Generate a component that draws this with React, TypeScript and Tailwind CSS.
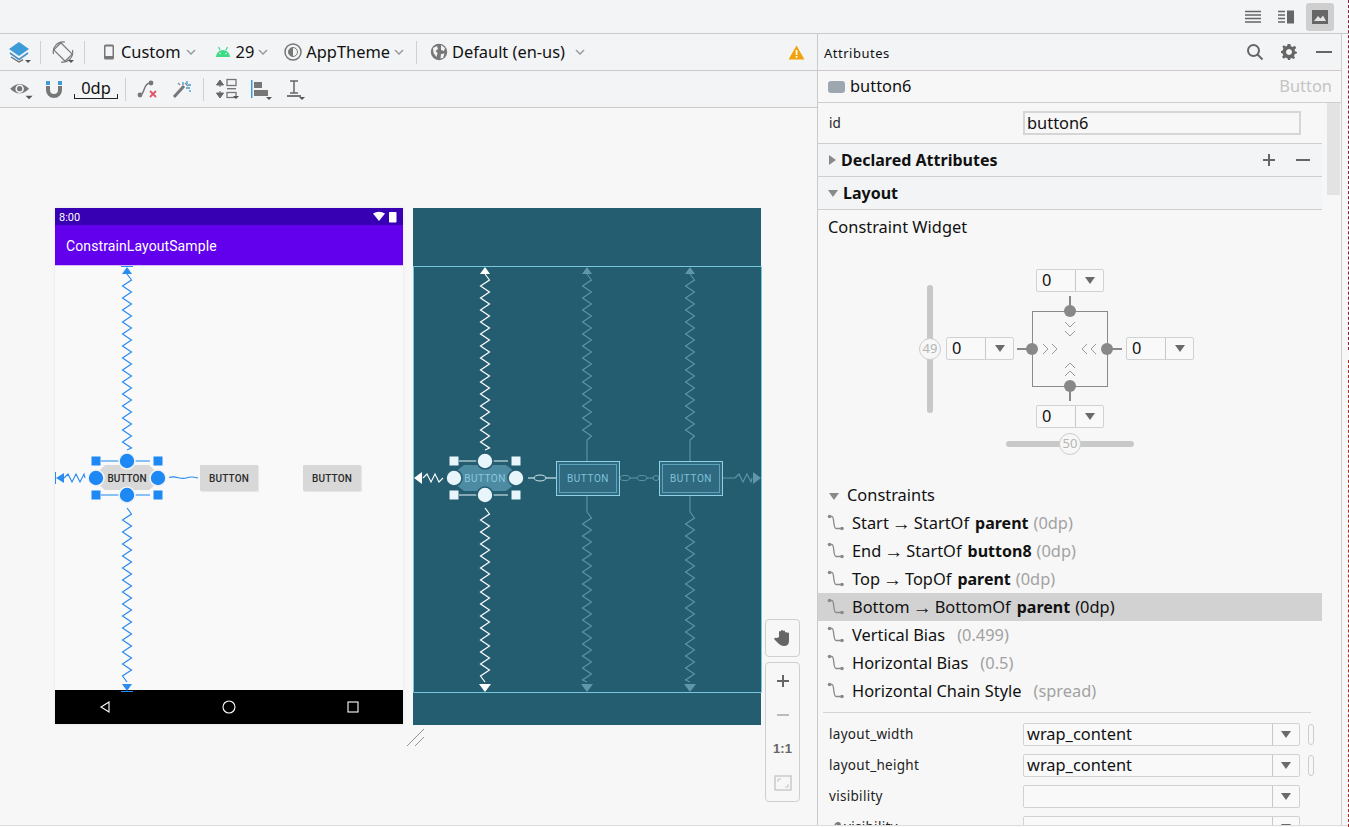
const font = { fontFamily: '"Noto Sans", "Open Sans", sans-serif' };

// zigzag along a vertical run, used for the constraint springs
const zigV = (x: number, y1: number, y2: number, amp = 4.5, step = 6) => {
  let d = `M${x} ${y1}`;
  let side = 1;
  for (let y = y1 + step; y < y2; y += step) {
    d += ` L${x + side * amp} ${y}`;
    side = -side;
  }
  return d + ` L${x} ${y2}`;
};

const zigH = (x1: number, x2: number, y: number, amp = 4, step = 4) => {
  let d = `M${x1} ${y}`;
  let side = -1;
  for (let x = x1 + step; x < x2; x += step) {
    d += ` L${x} ${y + side * amp}`;
    side = -side;
  }
  return d + ` L${x2} ${y}`;
};

const Chevron = ({ className = '' }: { className?: string }) => (
  <svg width="10" height="6" viewBox="0 0 10 6" className={className}>
    <path d="M1 1 L5 5 L9 1" fill="none" stroke="#9aa0a6" strokeWidth="1.6" />
  </svg>
);

const Corner = () => <path d="M0 0 h6 l-3 3 z" fill="#555" />;

const Sep = ({ className = '' }: { className?: string }) => <div className={`w-px h-[23px] bg-[#d0d0d0] ${className}`} />;

const LayersIcon = () => (
  <svg width="24" height="24" viewBox="0 0 24 24">
    <path d="M11 2 L21 9 L11 16 L1 9 Z" fill="#3d9bd8" />
    <path d="M2 13 L11 19.5 L20 13" fill="none" stroke="#4a90c8" strokeWidth="1.6" />
    <path d="M3 17 L11 22 L15 19.6" fill="none" stroke="#6e6e6e" strokeWidth="1.4" />
    <g transform="translate(17 20)"><Corner /></g>
  </svg>
);

const RotateIcon = () => (
  <svg width="24" height="24" viewBox="0 0 24 24" fill="none" stroke="#777" strokeWidth="1.2">
    <rect x="6" y="4" width="10" height="16" rx="1" transform="rotate(-45 11 12)" />
    <path d="M1.5 14 A10 10 0 0 1 13 2" />
    <path d="M20.5 10 A10 10 0 0 1 9 22" />
    <g transform="translate(16 20)" stroke="none"><Corner /></g>
  </svg>
);

const PhoneIcon = () => (
  <svg width="12" height="16" viewBox="0 0 12 16">
    <rect x="1" y="0.5" width="10" height="15" rx="1.5" fill="#777" />
    <rect x="2.5" y="2.5" width="7" height="9.5" fill="#f4f4f6" />
  </svg>
);

const AndroidIcon = () => (
  <svg width="16" height="12" viewBox="0 0 16 12">
    <path d="M1 11 A7 7 0 0 1 15 11 Z" fill="#3ddc84" />
    <path d="M3.5 1 L5 4 M12.5 1 L11 4" stroke="#3ddc84" strokeWidth="1.2" />
    <circle cx="5" cy="7.5" r="0.8" fill="#f4f4f6" />
    <circle cx="11" cy="7.5" r="0.8" fill="#f4f4f6" />
  </svg>
);

const ThemeIcon = () => (
  <svg width="18" height="18" viewBox="0 0 18 18">
    <circle cx="9" cy="9" r="8" fill="none" stroke="#777" strokeWidth="1.5" />
    <path d="M9 4.5 A4.5 4.5 0 0 0 9 13.5 Z" fill="#777" />
    <circle cx="9" cy="9" r="4.5" fill="none" stroke="#777" strokeWidth="1" />
  </svg>
);

const GlobeIcon = () => (
  <svg width="18" height="18" viewBox="0 0 18 18">
    <circle cx="9" cy="9" r="8.2" fill="#777" />
    <path d="M3 5 L7 3 L8 6 L5.5 8 L7.5 10 L6.5 14 L3.5 10 Z M11 2 L15 5 L14 8 L11 7 Z M11 11 L14.5 10.5 L13 15 L10.5 15.5 Z" fill="#f4f4f6" />
  </svg>
);

const WarnIcon = () => (
  <svg width="17" height="15" viewBox="0 0 17 15">
    <path d="M8.5 0.5 L16.5 14.5 H0.5 Z" fill="#f0a30a" />
    <rect x="7.7" y="5" width="1.7" height="5" fill="#fff" />
    <rect x="7.7" y="11" width="1.7" height="1.8" fill="#fff" />
  </svg>
);

const EyeIcon = () => (
  <svg width="26" height="24" viewBox="0 0 22 20">
    <path d="M1 8 Q9 0 17 8 Q9 16 1 8 Z" fill="#777" />
    <circle cx="9" cy="8" r="3.6" fill="#f4f4f6" />
    <circle cx="9" cy="8" r="2.2" fill="#777" />
    <g transform="translate(14 14)"><Corner /></g>
  </svg>
);

const MagnetIcon = () => (
  <svg width="18" height="18" viewBox="0 0 18 18">
    <path d="M3 6 V10 A6 6 0 0 0 15 10 V6" fill="none" stroke="#777" strokeWidth="4" />
    <rect x="1" y="1" width="4" height="4" fill="#3d9bd8" />
    <rect x="13" y="1" width="4" height="4" fill="#3d9bd8" />
  </svg>
);

const ClearIcon = () => (
  <svg width="22" height="20" viewBox="0 0 22 20">
    <path d="M3 16 C8 16 6 4 13 4" fill="none" stroke="#777" strokeWidth="1.5" />
    <circle cx="3" cy="16" r="2.4" fill="#777" />
    <circle cx="14" cy="4" r="2.4" fill="#777" />
    <path d="M13 12 L19 18 M19 12 L13 18" stroke="#e05565" strokeWidth="1.8" />
  </svg>
);

const WandIcon = () => (
  <svg width="20" height="20" viewBox="0 0 20 20">
    <path d="M2 18 L12 7" stroke="#777" strokeWidth="3" />
    <path d="M11 3 V6 M15 2 V5 M14 9 H18 M16 6 H19 M18 11 V13" stroke="#3d9bd8" strokeWidth="1.3" />
    <path d="M6 4 L8 6 M13 4 L16 7" stroke="#888" strokeWidth="1.2" />
  </svg>
);

const DistributeIcon = () => (
  <svg width="24" height="22" viewBox="0 0 24 22">
    <path d="M4 2 L7.5 7 H0.5 Z M4 20 L7.5 15 H0.5 Z M4 6 V9 M4 13 V16" fill="#666" stroke="#666" />
    <rect x="11" y="1.5" width="9" height="6" fill="none" stroke="#777" strokeWidth="1.3" />
    <rect x="11" y="10" width="9" height="1.4" fill="#777" />
    <rect x="11" y="14.5" width="9" height="5" fill="none" stroke="#777" strokeWidth="1.3" />
    <g transform="translate(17 18)"><Corner /></g>
  </svg>
);

const AlignIcon = () => (
  <svg width="24" height="22" viewBox="0 0 24 22">
    <rect x="1" y="1" width="1.5" height="18" fill="#3d9bd8" />
    <rect x="4" y="3" width="8" height="6" fill="#777" />
    <rect x="4" y="11" width="14" height="6" fill="#777" />
    <g transform="translate(16 18)"><Corner /></g>
  </svg>
);

const BaselineIcon = () => (
  <svg width="24" height="22" viewBox="0 0 24 22">
    <path d="M4 2 H12 M8 2 V14 M4 14 H12" stroke="#666" strokeWidth="1.5" fill="none" />
    <rect x="1" y="16" width="14" height="2" fill="#777" />
    <g transform="translate(13 18)"><Corner /></g>
  </svg>
);

const LinkIcon = () => (
  <svg width="18" height="18" viewBox="0 0 18 18" className="shrink-0">
    <path d="M2.5 2.5 H5 C7.5 2.5 6 14.5 9 14.5 H15" fill="none" stroke="#8a8a8a" strokeWidth="1.3" />
    <circle cx="2.5" cy="2.5" r="1.8" fill="#8a8a8a" />
    <circle cx="15" cy="14.5" r="1.8" fill="#8a8a8a" />
  </svg>
);

const Triangle = ({ className = 'text-[#8a8a8a]' }: { className?: string }) => (
  <svg width="10" height="7" viewBox="0 0 10 7" className={className}>
    <path d="M0 0 H10 L5 7 Z" fill="currentColor" />
  </svg>
);

const TriangleRight = () => (
  <svg width="10" height="10" viewBox="0 0 10 10">
    <path d="M1 0 L8 5 L1 10 Z" fill="#8a8a8a" />
  </svg>
);

const Combo = ({ value, className = '', arrow = 30 }: { value?: string; className?: string; arrow?: number }) => (
  <div className={`flex h-[23px] items-stretch rounded-[2px] border border-[#d2d2d2] bg-[#f9f9f9] ${className}`}>
    <div className="flex-1 pl-[3px] text-[16.4px] leading-[20px] text-[#111]">{value}</div>
    <div className="flex items-center justify-center border-l border-[#c8c8c8]" style={{ width: arrow - 3 }}>
      <Triangle className="text-[#6a6a6a]" />
    </div>
  </div>
);

const PhoneSprings = () => (
  <svg className="absolute inset-0 overflow-visible" width="348" height="516" viewBox="55 208 348 516" fill="none">
    <path d="M121 266.5 H133" stroke="#2a8cf0" />
    <path d="M127 267 L132 274 H122 Z" fill="#2a8cf0" />
    <path d={zigV(127, 274, 450)} stroke="#2a8cf0" strokeWidth="1.2" />
    <path d={zigV(127, 508, 682)} stroke="#2a8cf0" strokeWidth="1.2" />
    <path d="M127 691 L132 684 H122 Z" fill="#2a8cf0" />
    <path d="M121 691.5 H133" stroke="#2a8cf0" />
    <path d="M55.5 472 V484" stroke="#2a8cf0" />
    <path d="M56 478 L64 473 V483 Z" fill="#2a8cf0" />
    <path d={zigH(64, 85, 478, 4, 4)} stroke="#2a8cf0" strokeWidth="1.1" />
    <path d="M169 477.5 C176 475 180 480 186 478 S194 477 198 478" stroke="#2a8cf0" strokeWidth="1.1" />
    <path d="M105 465 H149 L157 473 V483 L149 490 H105 L97 483 V473 Z" fill="#d8d8d8" />
    <path d="M101 461 H150 M101 495 H150" stroke="#1e88f5" strokeWidth="1.2" />
    {[[96, 461], [158, 461], [96, 495], [158, 495]].map(([x, y]) => (
      <rect key={`${x}${y}`} x={x - 4.5} y={y - 4.5} width="9" height="9" fill="#1e88f5" />
    ))}
    {[[127, 461], [127, 495], [96, 478], [158, 478]].map(([x, y]) => (
      <circle key={`${x}${y}`} cx={x} cy={y} r="8" fill="#1e88f5" stroke="#f4f4f4" strokeWidth="1.6" />
    ))}
  </svg>
);

const BlueprintSprings = () => {
  const dim = '#5f97a8';
  const bright = '#ffffff';
  return (
    <svg className="absolute inset-0 overflow-visible" width="348" height="517" viewBox="413 208 348 517" fill="none">
      <path d="M413.5 266.5 H761.5 V692.5 H413.5 Z" stroke="#76c6dd" strokeWidth="1" />
      <path d="M485 267 L490 274 H480 Z" fill={bright} />
      <path d={zigV(485, 274, 450)} stroke={bright} strokeWidth="1.2" />
      <path d={zigV(485, 508, 682)} stroke={bright} strokeWidth="1.2" />
      <path d="M485 692 L491 684 H479 Z" fill={bright} />
      {[587, 690].map(x => (
        <g key={x} stroke={dim}>
          <path d={`M${x} 267 L${x + 5} 274 H${x - 5} Z`} fill={dim} stroke="none" />
          <path d={zigV(x, 274, 440)} strokeWidth="1.1" />
          <path d={`M${x} 440 V461`} strokeWidth="1.1" />
          <path d={`M${x} 496 V512`} strokeWidth="1.1" />
          <path d={zigV(x, 512, 682)} strokeWidth="1.1" />
          <path d={`M${x} 692 L${x + 6} 684 H${x - 6} Z`} fill={dim} stroke="none" />
        </g>
      ))}
      <path d="M414 478 L422 472 V484 Z" fill={bright} />
      <path d={zigH(423, 443, 478, 4, 4)} stroke={bright} strokeWidth="1.1" />
      <path d="M528 478 H556" stroke="#cfe6ee" strokeWidth="1.2" />
      <ellipse cx="540" cy="478" rx="6" ry="3" fill="#245c70" stroke="#cfe6ee" />
      <path d="M620 478 H659" stroke={dim} strokeWidth="1.2" />
      <ellipse cx="625" cy="478" rx="5" ry="2.5" fill="#245c70" stroke={dim} />
      <ellipse cx="642" cy="478" rx="5" ry="2.5" fill="#245c70" stroke={dim} />
      <ellipse cx="656" cy="478" rx="3" ry="2.5" fill="#245c70" stroke={dim} />
      <path d="M723 478 H735" stroke={dim} />
      <path d={zigH(735, 752, 478, 4, 4)} stroke={dim} strokeWidth="1.1" />
      <path d="M761 478 L753 472 V484 Z" fill={dim} />
      <path d="M464 465 H506 L515 472 V484 L506 491 H464 L455 484 V472 Z" fill="#4d8ba3" />
      <path d="M459 461 H508 M459 495 H508" stroke="#e8f6fc" strokeWidth="1.2" />
      {[[454, 461], [516, 461], [454, 495], [516, 495]].map(([x, y]) => (
        <rect key={`${x}${y}`} x={x - 4.5} y={y - 4.5} width="9" height="9" fill="#e8f6fc" />
      ))}
      {[[485, 461], [485, 495], [454, 478], [516, 478]].map(([x, y]) => (
        <circle key={`${x}${y}`} cx={x} cy={y} r="8" fill="#e8f6fc" stroke="#245c70" strokeWidth="1.6" />
      ))}
    </svg>
  );
};

const PhoneButton = ({ className }: { className: string }) => (
  <div className={`absolute flex h-[26px] w-[58px] items-center justify-center rounded-[1px] bg-[#d8d8d8] shadow-[1px_1px_1px_#e6e6e6] font-['Roboto'] text-[10px] font-medium tracking-[0.2px] text-[#2a2a2a] ${className}`}>
    BUTTON
  </div>
);

const BlueButton = ({ className }: { className: string }) => (
  <div className={`absolute h-[35px] w-[64px] border border-[#8fd0e5] bg-[#2f6a80] p-[2px] ${className}`}>
    <div className="flex h-full items-center justify-center border border-[#5ea3bb] font-['Roboto'] text-[10px] tracking-[0.6px] text-[#7fc3da]">
      BUTTON
    </div>
  </div>
);

const ZoomBtn = ({ children }: { children: React.ReactNode }) => (
  <div className="flex h-[34px] items-center justify-center">{children}</div>
);

const Canvas = () => (
  <div className="relative flex-1 bg-[#f7f7f7]">
    {/* phone preview */}
    <div className="absolute left-[55px] top-[100px] flex h-[516px] w-[348px] flex-col bg-[#f9f9f9] shadow-[0_0_3px_#e4e4e4]">
      <div className="flex h-[17px] items-center justify-between bg-[#3700b3] pl-[4px] pr-[6px] font-['Roboto'] text-[11px] text-white">
        <span className="pt-[3px]">8:00</span>
        <svg width="25" height="12" viewBox="0 0 25 12">
          <path d="M1 2.5 Q7 -1 13 2.5 L7 10 Z" fill="#fff" />
          <rect x="17" y="1" width="7.5" height="10.5" rx="0.8" fill="#fff" />
        </svg>
      </div>
      <div className="flex h-[41px] items-center border-b border-[#d7b8f5] bg-[#6200ee] pl-[11px] pt-[3px] font-['Roboto'] text-[14px] tracking-[0.1px] text-white">
        ConstrainLayoutSample
      </div>
      <div className="relative flex-1">
        <PhoneButton className="left-[145px] top-[199px]" />
        <PhoneButton className="left-[248px] top-[199px]" />
      </div>
      <div className="flex h-[34px] items-center justify-between bg-black px-[44px]">
        <svg width="12" height="12" viewBox="0 0 12 12"><path d="M10 1 L2 6 L10 11 Z" fill="none" stroke="#fff" strokeWidth="1.1" /></svg>
        <svg width="14" height="14" viewBox="0 0 14 14"><circle cx="7" cy="7" r="6" fill="none" stroke="#fff" strokeWidth="1.1" /></svg>
        <svg width="12" height="12" viewBox="0 0 12 12"><rect x="1" y="1" width="10" height="10" fill="none" stroke="#fff" strokeWidth="1.1" /></svg>
      </div>
      <PhoneSprings />
      <div className="absolute left-[52px] top-[257px] flex h-[26px] w-[40px] items-center justify-center font-['Roboto'] text-[10px] font-medium text-[#2a2a2a]">
        BUTTON
      </div>
    </div>

    {/* blueprint */}
    <div className="absolute left-[413px] top-[100px] h-[517px] w-[348px] bg-[#245c70]">
      <BlueprintSprings />
      <div className="absolute left-[42px] top-[257px] flex h-[26px] w-[60px] items-center justify-center font-['Roboto'] text-[10px] tracking-[0.5px] text-[#8cc8dd]">
        BUTTON
      </div>
      <BlueButton className="left-[143px] top-[253px]" />
      <BlueButton className="left-[246px] top-[253px]" />
    </div>

    <svg className="absolute left-[406px] top-[620px]" width="20" height="20" viewBox="0 0 20 20">
      <path d="M1 18 L18 1 M9 18 L18 9" stroke="#777" strokeWidth="0.8" />
    </svg>

    {/* zoom controls */}
    <div className="absolute left-[765px] top-[511px] flex flex-col gap-[5px]">
      <div className="flex h-[38px] w-[35px] items-center justify-center rounded-[4px] border border-[#cfcfcf]">
        <svg width="20" height="20" viewBox="0 0 20 20">
          <path d="M6 9 V4 a1 1 0 0 1 2 0 V3 a1 1 0 0 1 2 0 V3.5 a1 1 0 0 1 2 0 V5 a1 1 0 0 1 2 0 V5.5 a1 1 0 0 1 2 0 V13 Q16 18 11 18 Q8 18 6 16 L1 11 Q2 9 4 10 Z" fill="#666" />
        </svg>
      </div>
      <div className="flex h-[140px] w-[35px] flex-col items-center justify-center rounded-[4px] border border-[#cfcfcf]">
        <ZoomBtn>
          <svg width="14" height="14" viewBox="0 0 14 14"><path d="M7 1 V13 M1 7 H13" stroke="#666" strokeWidth="2" /></svg>
        </ZoomBtn>
        <ZoomBtn>
          <svg width="14" height="14" viewBox="0 0 14 14"><path d="M1 7 H13" stroke="#b9bcc2" strokeWidth="2" /></svg>
        </ZoomBtn>
        <ZoomBtn>
          <span className="font-['Liberation_Sans'] text-[13px] font-bold text-[#666]">1:1</span>
        </ZoomBtn>
        <ZoomBtn>
          <svg width="18" height="16" viewBox="0 0 18 16" fill="none" stroke="#c4c4c4">
            <rect x="1" y="1" width="16" height="14" strokeWidth="1.3" />
            <path d="M4 7 V4 H7 M14 9 V12 H11" />
          </svg>
        </ZoomBtn>
      </div>
    </div>
  </div>
);

const TopBar = () => (
  <div className="flex h-[34px] shrink-0 items-center justify-end border-b border-[#c9c9c9] bg-[#f3f4f6] pr-[15px]">
    <svg width="16" height="14" viewBox="0 0 16 14" className="mr-[17px]">
      <path d="M0 1.5 H16 M0 5 H16 M0 8.5 H16 M0 12 H16" stroke="#666" strokeWidth="1.3" />
    </svg>
    <svg width="16" height="14" viewBox="0 0 16 14" className="mr-[12px]">
      <path d="M0 1.5 H7 M0 5 H7 M0 8.5 H7 M0 12 H7" stroke="#666" strokeWidth="1.3" />
      <rect x="9" y="0.5" width="7" height="13" fill="#666" />
    </svg>
    <div className="flex h-[28px] w-[28px] items-center justify-center rounded-[3px] bg-[#cfcfcf]">
      <svg width="16" height="14" viewBox="0 0 16 14">
        <rect width="16" height="14" fill="#666" />
        <path d="M2 11 L6 6 L8.5 8.5 L11 5.5 L14 11 Z" fill="#e4e4e4" />
      </svg>
    </div>
  </div>
);

const DesignToolbar = () => (
  <div className="flex h-[37px] shrink-0 items-center border-b border-[#c9c9c9] bg-[#f3f4f6] text-[16.4px] text-[#111]">
    <div className="ml-[8px]"><LayersIcon /></div>
    <Sep className="ml-[8px]" />
    <div className="ml-[11px]"><RotateIcon /></div>
    <Sep className="ml-[8px]" />
    <div className="ml-[18px]"><PhoneIcon /></div>
    <span className="ml-[6px]">Custom</span>
    <Chevron className="ml-[5px]" />
    <div className="ml-[19px]"><AndroidIcon /></div>
    <span className="ml-[5px]">29</span>
    <Chevron className="ml-[4px]" />
    <div className="ml-[16px]"><ThemeIcon /></div>
    <span className="ml-[4px]">AppTheme</span>
    <Chevron className="ml-[4px]" />
    <Sep className="ml-[12px]" />
    <div className="ml-[13px]"><GlobeIcon /></div>
    <span className="ml-[4px]">Default (en-us)</span>
    <Chevron className="ml-[10px]" />
    <div className="ml-auto mr-[12px]"><WarnIcon /></div>
  </div>
);

const ActionToolbar = () => (
  <div className="flex h-[37px] shrink-0 items-center border-b border-[#c9c9c9] bg-[#f3f4f6]">
    <div className="ml-[9px] mt-[3px]"><EyeIcon /></div>
    <div className="ml-[10px]"><MagnetIcon /></div>
    <div className="relative ml-[11px] flex h-[22px] w-[44px] items-start justify-center text-[16.4px] leading-[20px] text-[#111]">
      0dp
      <div className="absolute bottom-[1px] left-0 right-0 h-[5px] border-x border-b border-[#222]" />
    </div>
    <Sep className="ml-[7px]" />
    <div className="ml-[11px]"><ClearIcon /></div>
    <div className="ml-[13px]"><WandIcon /></div>
    <Sep className="ml-[11px]" />
    <div className="ml-[12px]"><DistributeIcon /></div>
    <div className="ml-[10px] mt-[2px]"><AlignIcon /></div>
    <div className="ml-[12px] mt-[2px]"><BaselineIcon /></div>
  </div>
);

const SectionHeader = ({ label, closed, children }: { label: string; closed?: boolean; children?: React.ReactNode }) => (
  <div className="flex h-[33px] shrink-0 items-center border-b border-[#cfcfcf] bg-[#f3f4f6] pl-[10px] pr-[11px]">
    {closed ? <TriangleRight /> : <Triangle />}
    <span className={`${closed ? 'ml-[3px]' : 'ml-[5px]'} text-[16px] font-bold text-[#111]`}>{label}</span>
    {children}
  </div>
);

const ConstraintWidget = () => (
  <div className="relative h-[200px] shrink-0">
    <svg className="absolute inset-0 overflow-visible" width="504" height="200" viewBox="818 260 504 200" fill="none">
      <rect x="927" y="285" width="6" height="128" rx="3" fill="#c8c8c8" />
      <rect x="1006" y="441" width="128" height="6" rx="3" fill="#c8c8c8" />
      <rect x="1032.5" y="311.5" width="75" height="75" stroke="#8a8a8a" />
      <path d="M1070 296 V311 M1070 386 V401 M1017 349 H1032 M1107 349 H1122" stroke="#888" strokeWidth="2" />
      {[[1070, 311], [1070, 386], [1032, 349], [1107, 349]].map(([x, y]) => (
        <circle key={`${x}${y}`} cx={x} cy={y} r="6" fill="#888" />
      ))}
      <g stroke="#9a9a9a">
        <path d="M1065 322 L1070 327 L1075 322 M1065 331 L1070 336 L1075 331" />
        <path d="M1065 368 L1070 363 L1075 368 M1065 376 L1070 371 L1075 376" />
        <path d="M1043 344 L1048 349 L1043 354 M1052 344 L1057 349 L1052 354" />
        <path d="M1087 344 L1082 349 L1087 354 M1096 344 L1091 349 L1096 354" />
      </g>
    </svg>
    <Combo value="0" arrow={31} className="absolute left-[218px] top-[9px] w-[68px] pl-[2px]" />
    <Combo value="0" arrow={31} className="absolute left-[128px] top-[77px] w-[68px] pl-[2px]" />
    <Combo value="0" arrow={31} className="absolute left-[308px] top-[77px] w-[68px] pl-[2px]" />
    <Combo value="0" arrow={31} className="absolute left-[218px] top-[145px] w-[68px] pl-[2px]" />
    <div className="absolute left-[101px] top-[78px] flex h-[22px] w-[22px] items-center justify-center rounded-full border border-[#cdcdcd] bg-[#f7f7f7] text-[13px] text-[#b5b5b5]">49</div>
    <div className="absolute left-[241px] top-[173px] flex h-[22px] w-[22px] items-center justify-center rounded-full border border-[#cdcdcd] bg-[#f7f7f7] text-[13px] text-[#b5b5b5]">50</div>
  </div>
);

const rows = [
  { from: 'Start', to: 'StartOf', b: 'parent', c: '(0dp)' },
  { from: 'End', to: 'StartOf', b: 'button8', c: '(0dp)' },
  { from: 'Top', to: 'TopOf', b: 'parent', c: '(0dp)' },
  { from: 'Bottom', to: 'BottomOf', b: 'parent', c: '(0dp)', on: true },
  { from: 'Vertical Bias', c: '(0.499)' },
  { from: 'Horizontal Bias', c: '(0.5)' },
  { from: 'Horizontal Chain Style', c: '(spread)' },
];

const ConstraintRow = ({ from, to, b, c, on }: { from: string; to?: string; b?: string; c: string; on?: boolean }) => (
  <div className={`flex h-[28px] shrink-0 items-center pl-[9px] text-[16.4px] text-[#111] ${on ? 'bg-[#d2d2d2]' : ''}`}>
    <LinkIcon />
    <span className="ml-[7px]">{from}</span>
    {to && <span className="ml-[3px] font-['Liberation_Sans'] text-[19px] leading-none">→</span>}
    {to && <span className="ml-[3px]">{to}</span>}
    {b && <span className="ml-[6px] text-[16px] font-bold">{b}</span>}
    <span className={`${b ? 'ml-[5px]' : 'ml-[12px]'} ${on ? 'text-[#111]' : 'text-[#a2a2a2]'}`}>{c}</span>
  </div>
);

const PropRow = ({ label, value, pin, tool }: { label: string; value?: string; pin?: boolean; tool?: boolean }) => (
  <div className="flex h-[31px] shrink-0 items-center pl-[11px]">
    <span className="flex w-[194px] items-center text-[13.5px] tracking-[0.3px] text-[#222]">
      {tool && (
        <svg width="12" height="12" viewBox="0 0 12 12" className="mr-[3px]">
          <path d="M1 11 L7 5 M6 3 A3 3 0 0 1 10 1 L8 3 L9 4 L11 2 A3 3 0 0 1 9 6" fill="none" stroke="#777" strokeWidth="1.4" />
        </svg>
      )}
      {label}
    </span>
    <Combo value={value} className="w-[277px]" arrow={30} />
    {pin && <div className="ml-[8px] h-[21px] w-[6px] rounded-[3px] border border-[#cdcdcd]" />}
  </div>
);

const Attributes = () => (
  <div className="flex w-[523px] flex-col overflow-hidden bg-[#f7f7f7]">
    <div className="flex h-[37px] shrink-0 items-center border-b border-[#cfc9c9] bg-[#f3f4f6] pl-[6px] pr-[9px]">
      <span className="pt-[3px] text-[13px] tracking-[0.5px] text-[#111]">Attributes</span>
      <svg width="18" height="18" viewBox="0 0 18 18" className="ml-auto" fill="none" stroke="#666" strokeWidth="2">
        <circle cx="7.5" cy="7.5" r="5.5" />
        <path d="M11.5 11.5 L16.5 16.5" />
      </svg>
      <svg width="16" height="16" viewBox="0 0 16 16" className="ml-[17px]">
        <path d="M6.6 0 H9.4 L9.9 2.2 L11.9 3 L13.8 1.8 L14.2 2.2 L15.2 4.1 L13.6 5.6 L13.9 7.2 L16 8 V9.2 L13.9 10 L13 11.9 L14 13.8 L12.6 15 L10.7 13.9 L9.4 14.4 L9 16 H7 L6.6 14.4 L4.7 13.6 L2.8 14.8 L1 13 L2.2 11.2 L1.6 9.6 L0 9 V7 L1.6 6.4 L2.4 4.6 L1.4 2.6 L2.8 1.2 L4.8 2.4 L6.2 1.8 Z M8 5 A3 3 0 1 0 8.01 5 Z" fill="#666" fillRule="evenodd" />
      </svg>
      <svg width="16" height="4" viewBox="0 0 16 4" className="ml-[19px]"><path d="M0 2 H16" stroke="#666" strokeWidth="2" /></svg>
    </div>
    <div className="flex h-[32px] shrink-0 items-center border-b border-[#cfcfcf] pl-[10px] pr-[9px]">
      <div className="h-[12px] w-[17px] rounded-[3px] bg-[#9ea7b0]" />
      <span className="ml-[5px] text-[16.4px] text-[#111]">button6</span>
      <span className="ml-auto text-[16.4px] text-[#c4c4c4]">Button</span>
    </div>
    <div className="flex min-h-0 flex-1 overflow-hidden">
      <div className="flex w-[504px] shrink-0 flex-col">
        <div className="flex h-[41px] shrink-0 items-center border-b border-[#cfcfcf] pl-[11px]">
          <span className="w-[194px] text-[13.5px] text-[#222]">id</span>
          <div className="h-[24px] w-[278px] border-2 border-[#d6d6d6] pl-[2px] text-[16.4px] leading-[20px] text-[#111]">button6</div>
        </div>
        <SectionHeader label="Declared Attributes" closed>
          <svg width="14" height="14" viewBox="0 0 14 14" className="ml-auto"><path d="M7 1 V13 M1 7 H13" stroke="#666" strokeWidth="2" /></svg>
          <svg width="14" height="4" viewBox="0 0 14 4" className="ml-[20px] mr-[1px]"><path d="M0 2 H14" stroke="#666" strokeWidth="2" /></svg>
        </SectionHeader>
        <SectionHeader label="Layout" />
        <div className="flex h-[34px] shrink-0 items-center pl-[10px] text-[16.4px] text-[#111]">Constraint Widget</div>
        <div className="h-[16px] shrink-0" />
        <ConstraintWidget />
        <div className="flex h-[48px] shrink-0 items-end pl-[11px] text-[16.4px] text-[#111]">
          <div className="mb-[8px]"><Triangle /></div>
          <span className="ml-[8px]">Constraints</span>
        </div>
        <div className="h-[1px] shrink-0" />
        {rows.map(r => <ConstraintRow key={r.from} {...r} />)}
        <div className="ml-[5px] mr-[11px] mt-[7px] h-px w-[488px] shrink-0 bg-[#d4d4d4]" />
        <div className="h-[6px] shrink-0" />
        <PropRow label="layout_width" value="wrap_content" pin />
        <PropRow label="layout_height" value="wrap_content" pin />
        <PropRow label="visibility" />
        <PropRow label="visibility" tool />
      </div>
      <div className="ml-[5px] h-[92px] w-[13px] shrink-0 bg-[#e3e3e3]" />
    </div>
  </div>
);

export default function App() {
  return (
    <div className="relative flex h-[827px] w-[1349px] flex-col overflow-hidden bg-[#f7f7f7]" style={font}>
      <TopBar />
      <div className="flex min-h-0 flex-1">
        <div className="flex w-[818px] shrink-0 flex-col border-r border-[#c9c9c9]">
          <DesignToolbar />
          <ActionToolbar />
          <Canvas />
        </div>
        <Attributes />
        <div className="flex-1 border-l border-[#cfcfcf] bg-[#f7f7f7]" />
      </div>
      <div className="h-[2px] shrink-0 border-t border-[#dedede] bg-[#fbfbfb]" />
      <div className="absolute right-0 top-0 h-[350px] w-px border-r border-dashed border-[#7a2540]" />
      <div className="absolute right-0 top-[360px] h-[467px] w-px border-r border-dashed border-[#a03030]" />
    </div>
  );
}
